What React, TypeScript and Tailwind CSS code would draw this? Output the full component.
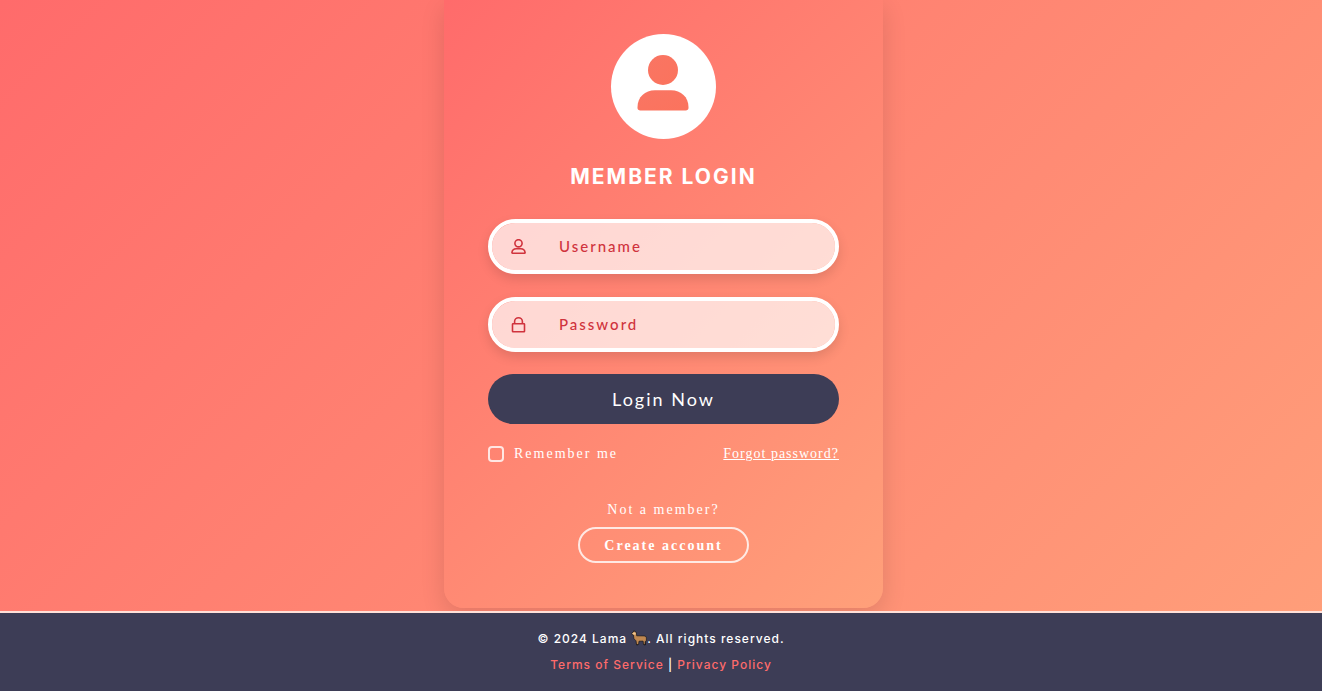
import { useState } from "react";
import type { ReactNode } from "react";

function Avatar() {
  return (
    <div className="flex size-[105px] items-center justify-center rounded-full bg-white">
      <svg viewBox="0 0 105 105" className="size-full" aria-hidden="true">
        <defs>
          <linearGradient id="avatar" x1="0" y1="0" x2="1" y2="1">
            <stop offset="0" stopColor="#f97563" />
            <stop offset="1" stopColor="#fb735d" />
          </linearGradient>
        </defs>
        <g fill="url(#avatar)">
          <circle cx="52" cy="36" r="15" />
          <path d="M26.500 73c0-10 7.500-16.800 17.500-16.800h16c10 0 17.500 6.800 17.500 16.800v1c0 1.600-1 2.500-2.800 2.500H29.300c-1.800 0-2.800-.9-2.800-2.500z" />
        </g>
      </svg>
    </div>
  );
}

function UserIcon() {
  return (
    <svg viewBox="0 0 16 16" className="size-4" fill="none" stroke="currentColor" strokeWidth="1.600" aria-hidden="true">
      <circle cx="7.500" cy="4.300" r="3.600" />
      <path d="M1.400 14.200h12.200c.4 0 .6-.2.500-.600-.3-2.400-2-3.900-4.300-3.900H5.200c-2.300 0-4 1.500-4.300 3.900 0 .4.100.600.500.600z" />
    </svg>
  );
}

function LockIcon() {
  return (
    <svg viewBox="0 0 16 16" className="size-4" fill="none" stroke="currentColor" strokeWidth="1.600" aria-hidden="true">
      <rect x="1.500" y="6.700" width="12" height="8" rx="0.500" />
      <path d="M3.600 6.500V4.500a3.900 3.700 0 0 1 7.800 0v2" />
    </svg>
  );
}

function Llama() {
  return (
    <svg viewBox="0 0 16 16" className="inline-block size-4 align-[-3px]" role="img" aria-label="Llama">
      <path d="M5.600 9.500v5.300H7l.2-4.300M12.700 9.500l.3 5.300h1.400l-.2-5" fill="#3a2a20" stroke="#17171d" strokeWidth="1" />
      <path
        d="M1 2.900 2.400 2 2.800.7l.9.100.2 1 1.500.6.300 3.400 7.400.1c1.500.1 2.300.9 2.300 2.300v2.500l-1.200.8-.2 3h-1.500l-.4-3.400-4.100.1-.4 3.300H5.500l-.5-3.700-2-2L2.300 4.800 1 4.400z"
        fill="#bf8750"
        stroke="#17171d"
        strokeWidth="0.700"
        strokeLinejoin="round"
      />
      <path d="M1.400 3.200 2.600 2.400l1.900.1.300 1.900-1.800.4-1.600-.7z" fill="#f1c790" />
    </svg>
  );
}

function Field({ id, label, type, icon }: { id: string; label: string; type: string; icon: ReactNode }) {
  return (
    <div className="flex h-[55px] items-center rounded-full border-4 border-white bg-white/70 bg-clip-padding pl-[19px] pr-6 text-[#d0333d] shadow-[0_5px_12px_rgba(0,0,0,0.12)]">
      <label htmlFor={id} aria-label={label} className="shrink-0">
        {icon}
      </label>
      <input
        id={id}
        name={id}
        type={type}
        aria-label={label}
        placeholder={label}
        className="ml-8 min-w-0 flex-1 bg-transparent font-[Lato,sans-serif] text-[15px] font-medium tracking-[2px] outline-none placeholder:text-[#d0333d]"
      />
    </div>
  );
}

export default function App() {
  const [remember, setRemember] = useState(false);

  return (
    <div className="flex min-h-screen flex-col bg-[linear-gradient(135deg,#ff6b6b,#ffa07a)] text-white">
      <main className="flex flex-1 justify-center overflow-hidden pb-[3px] pl-[5px]">
        <form
          onSubmit={(event) => event.preventDefault()}
          className="flex w-full max-w-[439px] flex-col rounded-b-[20px] bg-[linear-gradient(135deg,#ff6b6b,#ffa07a)] px-11 pb-11 pt-[34px] font-['Liberation_Serif',serif] shadow-[0_8px_24px_rgba(0,0,0,0.12)]"
        >
          <div className="flex flex-col items-center">
            <Avatar />
            <h1 className="mt-5 font-[Inter,sans-serif] text-[21px] font-bold leading-[35px] tracking-[2px]">MEMBER LOGIN</h1>
          </div>

          <div className="mt-[25px] flex flex-col gap-[23px]">
            <Field id="username" label="Username" type="text" icon={<UserIcon />} />
            <Field id="password" label="Password" type="password" icon={<LockIcon />} />
          </div>
          <button
            type="submit"
            className="mt-[22px] h-[50px] rounded-full bg-[#3d3d56] font-[Lato,sans-serif] text-[18px] tracking-[2px]"
          >
            Login Now
          </button>

          <div className="mt-5 flex items-center justify-between">
            <label className="flex items-center gap-[10px] text-[14px] leading-5 tracking-[2px]">
              <input
                type="checkbox"
                checked={remember}
                onChange={(event) => setRemember(event.target.checked)}
                className="size-4 appearance-none rounded border-2 border-white/80 checked:bg-white"
              />
              Remember me
            </label>
            <a href="#forgot" className="text-[14px] leading-5 tracking-[1px] underline">
              Forgot password?
            </a>
          </div>

          <div className="mt-9 flex flex-col items-center">
            <p className="text-[14px] leading-5 tracking-[2px]">Not a member?</p>
            <a
              href="#create"
              className="mt-[7px] flex h-9 items-center rounded-full border-2 border-white/80 px-6 text-[14px] font-bold tracking-[2px]"
            >
              Create account
            </a>
          </div>
        </form>
      </main>

      <footer className="border-t-2 border-[#ffe0d8] bg-[#3d3d56] pb-[13px] pt-[13px] text-center font-[Inter,sans-serif] text-[12px] font-medium leading-[26px] tracking-[1px]">
        <p>
          © 2024 Lama <Llama />. All rights reserved.
        </p>
        <p>
          <a href="#terms" className="text-[#ff6b6b]">
            Terms of Service
          </a>{" "}
          |{" "}
          <a href="#privacy" className="text-[#ff6b6b]">
            Privacy Policy
          </a>
        </p>
      </footer>
    </div>
  );
}
